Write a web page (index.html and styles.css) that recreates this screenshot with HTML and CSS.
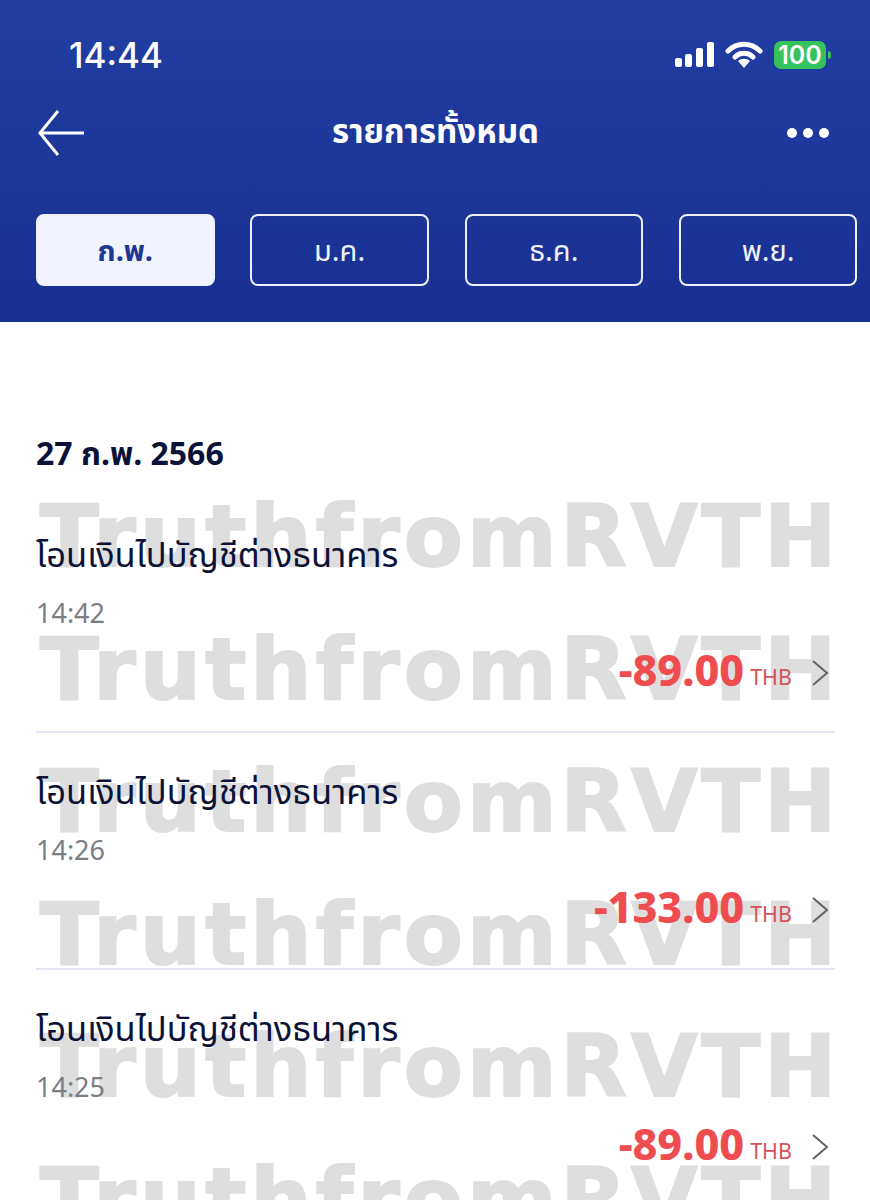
FILE: index.html
```html
<!DOCTYPE html>
<html lang="th">
<head>
    <meta charset="UTF-8">
    <meta name="viewport" content="width=device-width, initial-scale=1.0">
    <title>รายการทั้งหมด</title>
    <link rel="stylesheet" href="styles.css">
</head>
<body>
    <header class="top">
        <div class="status">
            <span class="clock">14:44</span>
            <div class="status-icons">
                <svg class="signal" width="39" height="26" viewBox="0 0 39 26">
                    <rect x="0" y="16" width="7" height="9" rx="2" fill="#fff"/>
                    <rect x="10" y="12" width="7" height="13" rx="2" fill="#fff"/>
                    <rect x="21" y="6" width="7" height="19" rx="2" fill="#fff"/>
                    <rect x="32" y="0" width="7" height="25" rx="2" fill="#fff"/>
                </svg>
                <svg class="wifi" width="38" height="28" viewBox="0 0 38 28">
                    <path d="M3 10 C12 1 26 1 35 10" fill="none" stroke="#fff" stroke-width="5" stroke-linecap="round"/>
                    <path d="M10 16 C15 11 23 11 28 16" fill="none" stroke="#fff" stroke-width="5" stroke-linecap="round"/>
                    <path d="M13 20 C16 17 22 17 25 20 L19 27 Z" fill="#fff"/>
                </svg>
                <div class="battery"><span class="battery-level">100</span><span class="battery-cap"></span></div>
            </div>
        </div>
        <div class="title-bar">
            <svg class="back" width="46" height="46" viewBox="0 0 46 46">
                <path d="M46 23 H2 M20 1 L2 23 L20 45" fill="none" stroke="#fff" stroke-width="3"/>
            </svg>
            <h1>รายการทั้งหมด</h1>
            <div class="more"><i></i><i></i><i></i></div>
        </div>
        <div class="months">
            <button class="month active">ก.พ.</button>
            <button class="month">ม.ค.</button>
            <button class="month">ธ.ค.</button>
            <button class="month">พ.ย.</button>
        </div>
    </header>

    <main class="list">
        <div class="watermark">
            <span>TruthfromRVTH</span>
            <span>TruthfromRVTH</span>
            <span>TruthfromRVTH</span>
            <span>TruthfromRVTH</span>
            <span>TruthfromRVTH</span>
            <span>TruthfromRVTH</span>
        </div>
        <h2 class="day">27 ก.พ. 2566</h2>

        <div class="item">
            <div class="item-name">โอนเงินไปบัญชีต่างธนาคาร</div>
            <div class="item-time">14:42</div>
            <div class="item-amount">
                <b>-89.00</b><span>THB</span>
                <svg width="18" height="26" viewBox="0 0 18 26"><path d="M2 1 L16 13 L2 25" fill="none" stroke="#5f636b" stroke-width="2"/></svg>
            </div>
        </div>
        <div class="item">
            <div class="item-name">โอนเงินไปบัญชีต่างธนาคาร</div>
            <div class="item-time">14:26</div>
            <div class="item-amount">
                <b>-133.00</b><span>THB</span>
                <svg width="18" height="26" viewBox="0 0 18 26"><path d="M2 1 L16 13 L2 25" fill="none" stroke="#5f636b" stroke-width="2"/></svg>
            </div>
        </div>
        <div class="item">
            <div class="item-name">โอนเงินไปบัญชีต่างธนาคาร</div>
            <div class="item-time">14:25</div>
            <div class="item-amount">
                <b>-89.00</b><span>THB</span>
                <svg width="18" height="26" viewBox="0 0 18 26"><path d="M2 1 L16 13 L2 25" fill="none" stroke="#5f636b" stroke-width="2"/></svg>
            </div>
        </div>
    </main>
</body>
</html>
```

FILE: styles.css
```css
html, body {
    margin: 0;
    height: 1200px;
    overflow: hidden;
}
body {
    font-family: "Noto Sans", "Noto Sans Thai", sans-serif;
    background: #fff;
    color: #0b1238;
}
.top {
    height: 322px;
    box-sizing: border-box;
    background: linear-gradient(#213ea2, #183092);
    padding-top: 29px;
}
.status {
    display: flex;
    justify-content: space-between;
    align-items: center;
    height: 52px;
    padding: 0 39px 0 69px;
}
.clock {
    color: #fff;
    font-family: Inter, sans-serif;
    font-size: 35px;
    font-weight: 500;
}
.status-icons {
    display: flex;
    align-items: center;
    gap: 11px;
}
.battery {
    display: flex;
    align-items: center;
    gap: 2px;
}
.battery-level {
    background: #36c25a;
    color: #fff;
    font-family: Inter, sans-serif;
    font-size: 25px;
    font-weight: 600;
    width: 52px;
    height: 28px;
    line-height: 28px;
    border-radius: 7px;
    text-align: center;
}
.battery-cap {
    width: 3px;
    height: 8px;
    background: #36c25a;
    border-radius: 0 3px 3px 0;
}
.title-bar {
    display: flex;
    align-items: center;
    justify-content: space-between;
    height: 62px;
    margin-top: 21px;
    padding: 0 41px 0 38px;
}
.title-bar h1 {
    margin: 0;
    color: #fff;
    font-size: 33px;
    font-weight: 700;
}
.more {
    display: flex;
    gap: 6px;
}
.more i {
    width: 10px;
    height: 10px;
    border-radius: 50%;
    background: #fff;
}
.months {
    display: flex;
    gap: 35.7px;
    margin-top: 50px;
    padding-left: 36px;
}
.month {
    flex: none;
    width: 178.6px;
    height: 72px;
    box-sizing: border-box;
    padding-top: 4px;
    border: 2px solid #eef1fb;
    border-radius: 8px;
    background: transparent;
    color: #eef1fb;
    font-family: inherit;
    font-size: 29px;
}
.month.active {
    background: #f2f4fd;
    color: #1d3795;
    font-weight: 700;
}
.list {
    position: relative;
    height: 878px;
    overflow: hidden;
    padding: 0 36px;
}
.watermark {
    position: absolute;
    top: 162px;
    left: 40px;
    display: flex;
    flex-direction: column;
}
.watermark span {
    height: 132.5px;
    line-height: 105px;
    font-family: "DejaVu Sans", sans-serif;
    font-size: 86px;
    font-weight: 700;
    letter-spacing: 4.1px;
    -webkit-text-stroke: 2px #dedede;
    color: #dedede;
    white-space: nowrap;
}
.day {
    position: relative;
    margin: 0;
    padding-top: 109px;
    height: 65px;
    line-height: 44px;
    font-size: 32px;
    font-weight: 700;
}
.item {
    position: relative;
    height: 237px;
    box-sizing: border-box;
    padding-top: 36px;
    border-bottom: 2px solid #e4e6f6;
    width: 799px;
}
.item:last-child {
    border-bottom: 0;
}
.item-name {
    font-size: 34.5px;
    line-height: 44px;
}
.item-time {
    margin-top: 19px;
    font-size: 27px;
    line-height: 36px;
    color: #7c7e86;
}
.item-amount {
    display: flex;
    justify-content: flex-end;
    align-items: center;
    gap: 6px;
    margin-top: 13px;
    height: 50px;
    padding-right: 6px;
    color: #ef4c50;
}
.item-amount b {
    font-size: 43px;
    font-weight: 800;
}
.item-amount span {
    font-size: 21.5px;
    color: #d8525a;
    margin-top: 15px;
    margin-right: 13px;
}
.item-amount svg {
    margin-top: 8px;
}
```
